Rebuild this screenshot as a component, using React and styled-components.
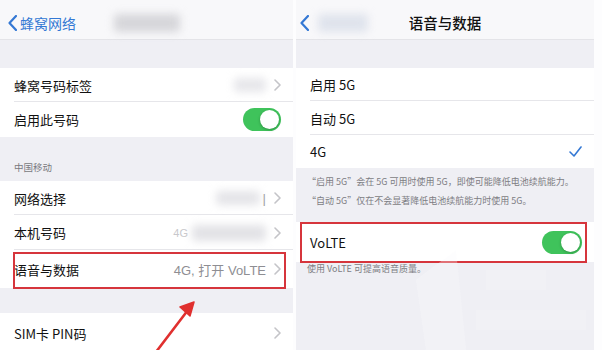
import React from "react";
import styled, { createGlobalStyle } from "styled-components";

const GlobalStyle = createGlobalStyle`
  html, body {
    margin: 0;
    padding: 0;
    background: #fdfdfe;
    font-family: "Noto Sans CJK SC", "Liberation Sans", sans-serif;
  }
`;

const Page = styled.div`
  position: relative;
  width: 602px;
  height: 350px;
  display: flex;
  overflow: hidden;
  background: #fdfdfe;
`;

const Panel = styled.div`
  width: ${(p) => p.w}px;
  margin-right: ${(p) => p.gap}px;
  height: 350px;
  display: flex;
  flex-direction: column;
  background: #efeff4;
  position: relative;
  overflow: hidden;
`;

const NavBar = styled.div`
  height: 40px;
  flex-shrink: 0;
  background: #f8f8fa;
  border-bottom: 1px solid #e4e4e8;
  box-sizing: border-box;
  display: flex;
  align-items: center;
  position: relative;
  padding-top: 6px;
`;

const Back = styled.div`
  display: flex;
  align-items: center;
  gap: 3px;
  padding-left: ${(p) => p.pad}px;
  color: #3478d4;
  font-size: 14px;
  svg {
    width: 9px;
    height: 16px;
  }
`;

const NavTitle = styled.div`
  position: absolute;
  left: 0;
  right: 0;
  top: 6px;
  bottom: 0;
  display: flex;
  align-items: center;
  justify-content: center;
  font-size: 14.5px;
  font-weight: 500;
  color: #111;
`;

const Blur = styled.div`
  width: ${(p) => p.w}px;
  height: ${(p) => p.h}px;
  background: ${(p) => p.c || "#dcdce0"};
  filter: blur(4px);
  border-radius: 4px;
  margin-left: ${(p) => p.ml || 0}px;
`;

const Spacer = styled.div`
  height: ${(p) => p.h}px;
  flex-shrink: 0;
`;

const Row = styled.div`
  height: ${(p) => p.h}px;
  flex-shrink: 0;
  background: #fff;
  display: flex;
  align-items: center;
  padding: 0 12px 0 14px;
  box-sizing: border-box;
  position: relative;
  font-size: 13px;
  color: #111;
  ${(p) =>
    p.sep &&
    `&::before {
      content: "";
      position: absolute;
      left: 14px;
      right: 0;
      bottom: 0;
      height: 1px;
      background: #e6e6ea;
    }`}
`;

const Highlight = styled.div`
  position: absolute;
  left: ${(p) => p.l}px;
  right: ${(p) => p.r}px;
  top: ${(p) => p.t}px;
  bottom: ${(p) => p.b}px;
  border: 2px solid #d6353c;
  pointer-events: none;
`;

const Label = styled.span`
  flex: 1;
  white-space: nowrap;
`;

const Value = styled.span`
  color: #8e8e93;
  font-size: 13px;
  margin-right: 8px;
  display: flex;
  align-items: center;
  font-family: "Liberation Sans", "Noto Sans CJK SC", sans-serif;
`;

const Chevron = styled.svg`
  width: 7px;
  height: 12px;
  flex-shrink: 0;
`;

const Toggle = styled.div`
  width: ${(p) => p.w}px;
  height: ${(p) => p.h}px;
  border-radius: ${(p) => p.h / 2}px;
  background: #3fc35b;
  position: relative;
  flex-shrink: 0;
  &::after {
    content: "";
    position: absolute;
    right: 2px;
    top: 2px;
    width: ${(p) => p.h - 4}px;
    height: ${(p) => p.h - 4}px;
    border-radius: 50%;
    background: #fff;
    box-shadow: 0 1px 3px rgba(0, 0, 0, 0.25);
  }
`;

const SectionHeader = styled.div`
  height: ${(p) => p.h}px;
  flex-shrink: 0;
  display: flex;
  align-items: flex-end;
  padding: 0 0 7px 14px;
  box-sizing: border-box;
  font-size: 9.5px;
  color: #7a7a80;
`;

const Footer = styled.div`
  flex-shrink: 0;
  padding: ${(p) => p.pt}px 10px 0 11px;
  height: ${(p) => p.h}px;
  box-sizing: border-box;
  font-size: 9px;
  color: #7d7d83;
  line-height: ${(p) => p.lh || 19}px;
  white-space: nowrap;
`;

const Check = styled.svg`
  width: 13px;
  height: 11px;
`;

const Watermark = styled.svg`
  position: absolute;
  left: 100px;
  bottom: 0;
  width: 200px;
  height: 110px;
  opacity: 0.3;
`;

const Arrow = styled.svg`
  position: absolute;
  left: 0;
  top: 0;
  width: 602px;
  height: 350px;
  pointer-events: none;
`;

const ChevronIcon = () => (
  <Chevron viewBox="0 0 7 12">
    <path d="M1 1 L6 6 L1 11" fill="none" stroke="#c4c4c8" strokeWidth="1.6" strokeLinecap="round" strokeLinejoin="round" />
  </Chevron>
);

const BackIcon = () => (
  <svg viewBox="0 0 9 16">
    <path d="M8 1 L1.5 8 L8 15" fill="none" stroke="#3478d4" strokeWidth="2.2" strokeLinecap="round" strokeLinejoin="round" />
  </svg>
);

const App = () => {
  return (
    <>
      <GlobalStyle />
      <Page>
        <Panel w={293} gap={3}>
          <NavBar>
            <Back pad={8}>
              <BackIcon />
              <span>蜂窝网络</span>
            </Back>
            <NavTitle>
              <Blur w={66} h={18} c="#d6d6da" />
            </NavTitle>
          </NavBar>
          <Spacer h={28} />
          <Row h={34} sep>
            <Label>蜂窝号码标签</Label>
            <Value>
              <Blur w={32} h={14} c="#e6e6ea" />
            </Value>
            <ChevronIcon />
          </Row>
          <Row h={35}>
            <Label>启用此号码</Label>
            <Toggle w={38} h={23} />
          </Row>
          <SectionHeader h={44}>中国移动</SectionHeader>
          <Row h={34} sep>
            <Label>网络选择</Label>
            <Value>
              <Blur w={44} h={14} c="#e4e4e8" />
              <span style={{ marginLeft: 3, color: "#999" }}>|</span>
            </Value>
            <ChevronIcon />
          </Row>
          <Row h={35} sep>
            <Label>本机号码</Label>
            <Value>
              <span style={{ color: "#c8c8cc", fontSize: 11 }}>4G</span>
              <Blur w={74} h={16} c="#e2e2e6" ml={4} />
            </Value>
            <ChevronIcon />
          </Row>
          <Row h={38}>
            <Label>语音与数据</Label>
            <Value>4G, 打开 VoLTE</Value>
            <ChevronIcon />
            <Highlight l={13} r={7} t={2} b={-1} />
          </Row>
          <Spacer h={25} />
          <Row h={40}>
            <Label>SIM卡 PIN码</Label>
            <ChevronIcon />
          </Row>
        </Panel>

        <Panel w={298} gap={0}>
          <NavBar>
            <Back pad={4}>
              <BackIcon />
              <Blur w={50} h={18} c="#dfe3ec" ml={6} />
            </Back>
            <NavTitle>语音与数据</NavTitle>
          </NavBar>
          <Spacer h={28} />
          <Row h={33} sep>
            <Label>启用 5G</Label>
          </Row>
          <Row h={34} sep>
            <Label>自动 5G</Label>
          </Row>
          <Row h={33}>
            <Label>4G</Label>
            <Check viewBox="0 0 13 11">
              <path d="M1 6 L5 10 L12 1" fill="none" stroke="#3478d4" strokeWidth="1.6" strokeLinecap="round" strokeLinejoin="round" />
            </Check>
          </Row>
          <Footer h={54} pt={4}>
            <div>“启用 5G”会在 5G 可用时使用 5G，即使可能降低电池续航能力。</div>
            <div>“自动 5G”仅在不会显著降低电池续航能力时使用 5G。</div>
          </Footer>
          <Row h={40}>
            <Label>VoLTE</Label>
            <Toggle w={40} h={23} />
            <Highlight l={4} r={7} t={0} b={-1} />
          </Row>
          <Footer h={30} pt={0} lh={14}>
            <div>使用 VoLTE 可提高语音质量。</div>
          </Footer>
          <Watermark viewBox="0 0 200 110">
            <path d="M20 40 L60 10 L70 110 L30 110 Z" fill="#fbfbfd" />
            <path d="M90 30 L150 30 L150 50 L90 50 Z" fill="#f8f8fa" />
            <path d="M80 70 L190 70 L190 90 L80 90 Z" fill="#f7f7f9" />
          </Watermark>
        </Panel>

        <Arrow viewBox="0 0 602 350">
          <path d="M156 352 L188 310" stroke="#e0302f" strokeWidth="2.6" strokeLinecap="round" />
          <path d="M194 302 L180 307 L190 316 Z" fill="#e0302f" stroke="#e0302f" strokeWidth="1.5" strokeLinejoin="round" />
        </Arrow>
      </Page>
    </>
  );
};

export default App;
